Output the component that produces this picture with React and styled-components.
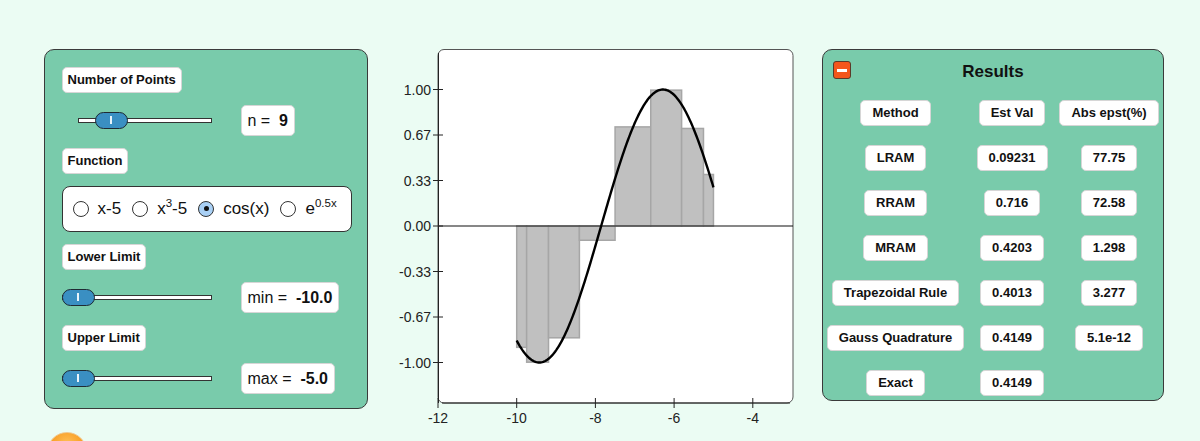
import React from "react";
import styled, { createGlobalStyle } from "styled-components";

const Global = createGlobalStyle`
  html, body { margin: 0; padding: 0; }
  body {
    background: #ebfcf3;
    font-family: "Liberation Sans", Arial, sans-serif;
    color: #111;
  }
`;

const Page = styled.div`
  display: flex;
  align-items: flex-start;
  padding: 49px 0 0 44px;
  height: 441px;
  box-sizing: border-box;
  overflow: hidden;
`;

const LeftColumn = styled.div`
  display: flex;
  flex-direction: column;
  width: 324px;
`;

const Panel = styled.div`
  box-sizing: border-box;
  background: #79cbab;
  border: 1.5px solid #3a3a3a;
  border-radius: 10px;
  width: ${(p) => p.$w}px;
`;

const ControlPanel = styled(Panel)`
  display: flex;
  flex-direction: column;
  gap: 12px;
  padding: 16.5px 16.5px 14.5px;
`;

const Label = styled.div`
  align-self: flex-start;
  box-sizing: border-box;
  height: 26px;
  line-height: 24px;
  padding: 0 5px;
  background: #fff;
  border: 1px solid #d6d6d6;
  border-radius: 5px;
  font-size: 13px;
  font-weight: bold;
`;

const Row = styled.div`
  display: flex;
  align-items: center;
  height: 31px;
`;

const SliderWrap = styled.div`
  position: relative;
  width: 150px;
  height: 17px;
  flex: none;
`;

const Track = styled.div`
  position: absolute;
  left: ${(p) => p.$start}px;
  right: 0;
  top: 6px;
  height: 5px;
  box-sizing: border-box;
  background: #fff;
  border: 1px solid #333;
`;

const Knob = styled.div`
  position: absolute;
  top: 0;
  left: ${(p) => p.$left}px;
  width: 33px;
  height: 17px;
  box-sizing: border-box;
  border: 1.5px solid #1f2a33;
  border-radius: 9px;
  background: #3a8fc2;
  display: flex;
  align-items: center;
  justify-content: center;
  &::after {
    content: "";
    width: 1.5px;
    height: 8px;
    background: #e8f4fb;
  }
`;

const ValueBox = styled.div`
  margin-left: 29px;
  box-sizing: border-box;
  height: 31px;
  line-height: 29px;
  padding: 0 6px;
  background: #fff;
  border: 1px solid #d6d6d6;
  border-radius: 5px;
  font-size: 16px;
  white-space: pre;
  b { font-weight: bold; }
`;

const RadioBox = styled.div`
  box-sizing: border-box;
  width: 290px;
  height: 46px;
  display: flex;
  align-items: center;
  padding: 0 10px;
  background: #fff;
  border: 1.5px solid #333;
  border-radius: 8px;
  gap: 11px;
`;

const RadioItem = styled.label`
  display: flex;
  align-items: center;
  flex: none;
  gap: 9px;
`;

const RadioText = styled.span`
  font-size: 17px;
  white-space: nowrap;
  sup { font-size: 11.5px; vertical-align: 0; position: relative; top: -7px; }
`;

const Circle = styled.span`
  flex: none;
  width: 16px;
  height: 16px;
  box-sizing: border-box;
  border-radius: 50%;
  border: 1.5px solid #333;
  background: ${(p) => (p.$on ? "#a9d0f5" : "#fff")};
  display: flex;
  align-items: center;
  justify-content: center;
  &::after {
    content: "";
    display: ${(p) => (p.$on ? "block" : "none")};
    width: 5px;
    height: 5px;
    border-radius: 50%;
    background: #111;
  }
`;

const PlayBall = styled.div`
  margin: 23px 0 0 3px;
  width: 40px;
  height: 40px;
  border-radius: 50%;
  background: radial-gradient(circle at 50% 30%, #ffc15a 0%, #f89a1e 55%, #e57d0c 100%);
  border: 1px solid #f0c890;
  box-sizing: border-box;
`;

const ChartSvg = styled.svg`
  display: block;
  flex: none;
  overflow: visible;
`;

const ResultsPanel = styled(Panel)`
  height: 352px;
  padding: 9.5px 0 0;
`;

const Header = styled.div`
  display: grid;
  grid-template-columns: 18px 1fr 18px;
  align-items: center;
  padding: 0 10px;
  height: 18px;
`;

const MinusButton = styled.button`
  width: 18px;
  height: 18px;
  padding: 0;
  box-sizing: border-box;
  background: #f4561b;
  border: 1px solid #5a3a2a;
  border-radius: 3px;
  display: flex;
  align-items: center;
  justify-content: center;
  &::after {
    content: "";
    width: 10px;
    height: 3px;
    background: #fff;
  }
`;

const Title = styled.div`
  text-align: center;
  font-size: 17px;
  font-weight: bold;
  line-height: 18px;
  padding-top: 3px;
`;

const Table = styled.div`
  display: grid;
  grid-template-columns: 145px 88px 106px;
  row-gap: 19px;
  margin-top: 22px;
`;

const Cell = styled.div`
  justify-self: center;
  box-sizing: border-box;
  height: 26px;
  line-height: 24px;
  padding: 0 11px;
  background: #fff;
  border: 1px solid #d6d6d6;
  border-radius: 5px;
  font-size: 13px;
  font-weight: bold;
  white-space: nowrap;
`;

function Slider({ start, knob }) {
  return (
    <SliderWrap>
      <Track $start={start} />
      <Knob $left={knob} />
    </SliderWrap>
  );
}

function Radio({ on, children }) {
  return (
    <RadioItem>
      <Circle $on={on} />
      <RadioText>{children}</RadioText>
    </RadioItem>
  );
}

const X = (u) => 70 + (u + 12) * 39.35;
const Y = (v) => 177 - 136.5 * v;

const nodes = [-0.9602898565, -0.7966664774, -0.5255324099, -0.1834346425, 0.1834346425, 0.5255324099, 0.7966664774, 0.9602898565];
const weights = [0.1012285363, 0.2223810345, 0.3137066459, 0.3626837834, 0.3626837834, 0.3137066459, 0.2223810345, 0.1012285363];

function Chart() {
  const a = -10, b = -5, h = (b - a) / 2, m = (a + b) / 2;
  let left = a;
  const bars = nodes.map((t, i) => {
    const w = weights[i] * h;
    const xv = m + h * t;
    const yv = Math.cos(xv);
    const r = { x0: left, x1: left + w, y: yv };
    left += w;
    return r;
  });
  const pts = [];
  for (let i = 0; i <= 200; i++) {
    const u = a + ((b - a) * i) / 200;
    pts.push(`${X(u).toFixed(2)},${Y(Math.cos(u)).toFixed(2)}`);
  }
  const yTicks = [
    [1, "1.00"], [2 / 3, "0.67"], [1 / 3, "0.33"], [0, "0.00"],
    [-1 / 3, "-0.33"], [-2 / 3, "-0.67"], [-1, "-1.00"],
  ];
  const xTicks = [-12, -10, -8, -6, -4];
  return (
    <ChartSvg width="454" height="392" viewBox="0 0 454 392">
      <rect x="70" y="0.5" width="355" height="353.5" rx="6" fill="#fff" stroke="#555" strokeWidth="1" />
      {bars.map((r, i) => (
        <rect
          key={i}
          x={X(r.x0)}
          y={Math.min(Y(r.y), Y(0))}
          width={X(r.x1) - X(r.x0)}
          height={Math.abs(Y(r.y) - Y(0))}
          fill="#c0c0c0"
          stroke="#a6a6a6"
          strokeWidth="1.5"
        />
      ))}
      <line x1="70" y1={Y(0)} x2="425" y2={Y(0)} stroke="#111" strokeWidth="1.2" />
      <line x1="70.5" y1="4" x2="70.5" y2="354" stroke="#222" strokeWidth="1" />
      <line x1="74" y1="354" x2="422" y2="354" stroke="#222" strokeWidth="1" />
      <polyline points={pts.join(" ")} fill="none" stroke="#000" strokeWidth="2.4" />
      {yTicks.map(([v, s]) => (
        <g key={s}>
          <line x1="65" y1={Y(v)} x2="75" y2={Y(v)} stroke="#222" strokeWidth="1" />
          <text x="63" y={Y(v) + 5} textAnchor="end" fontSize="14" fill="#222" fontFamily="Liberation Sans, Arial, sans-serif">{s}</text>
        </g>
      ))}
      {xTicks.map((u) => (
        <g key={u}>
          <line x1={X(u)} y1="349" x2={X(u)} y2="359" stroke="#222" strokeWidth="1" />
          <text x={X(u)} y="374" textAnchor="middle" fontSize="14" fill="#222" fontFamily="Liberation Sans, Arial, sans-serif">{u}</text>
        </g>
      ))}
    </ChartSvg>
  );
}

const rows = [
  ["Method", "Est Val", "Abs epst(%)"],
  ["LRAM", "0.09231", "77.75"],
  ["RRAM", "0.716", "72.58"],
  ["MRAM", "0.4203", "1.298"],
  ["Trapezoidal Rule", "0.4013", "3.277"],
  ["Gauss Quadrature", "0.4149", "5.1e-12"],
  ["Exact", "0.4149", null],
];

export default function App() {
  return (
    <>
      <Global />
      <Page>
        <LeftColumn>
          <ControlPanel $w={324}>
            <Label>Number of Points</Label>
            <Row>
              <Slider start={16} knob={33} />
              <ValueBox>n =  <b>9</b></ValueBox>
            </Row>
            <Label>Function</Label>
            <RadioBox>
              <Radio>x-5</Radio>
              <Radio>x<sup>3</sup>-5</Radio>
              <Radio on>cos(x)</Radio>
              <Radio>e<sup>0.5x</sup></Radio>
            </RadioBox>
            <Label>Lower Limit</Label>
            <Row>
              <Slider start={0} knob={0} />
              <ValueBox>min =  <b>-10.0</b></ValueBox>
            </Row>
            <Label>Upper Limit</Label>
            <Row>
              <Slider start={0} knob={0} />
              <ValueBox>max =  <b>-5.0</b></ValueBox>
            </Row>
          </ControlPanel>
          <PlayBall />
        </LeftColumn>
        <Chart />
        <ResultsPanel $w={342}>
          <Header>
            <MinusButton aria-label="collapse" />
            <Title>Results</Title>
            <span />
          </Header>
          <Table>
            {rows.map((r) =>
              r.map((c, j) =>
                c === null ? <span key={r[0] + j} /> : <Cell key={r[0] + j}>{c}</Cell>
              )
            )}
          </Table>
        </ResultsPanel>
      </Page>
    </>
  );
}
